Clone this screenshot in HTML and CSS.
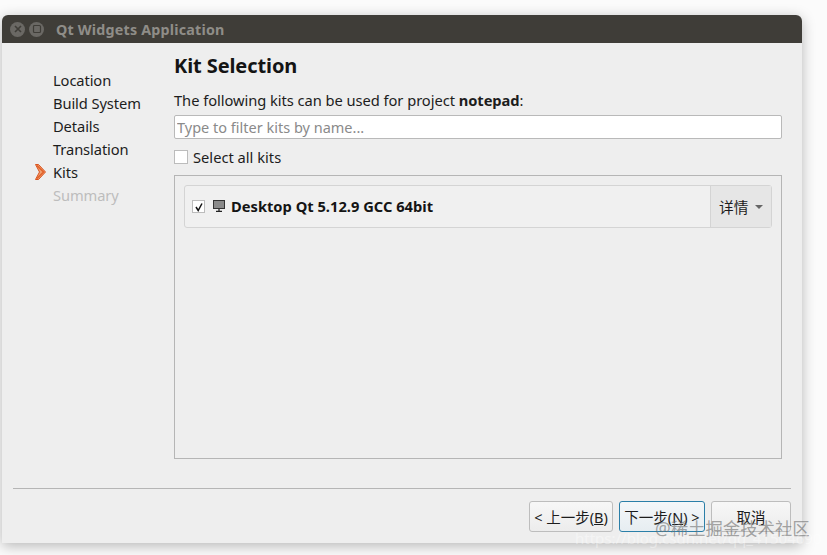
FILE: index.html
```html
<!DOCTYPE html>
<html>
<head>
    <title>Qt Widgets Application</title>
    <link rel="stylesheet" href="styles.css">
</head>
<body>
    <div class="window">
        <div class="titlebar">
            <span class="win-btn"><svg width="10" height="10" viewBox="0 0 10 10"><path d="M2 2l6 6M8 2l-6 6" stroke="#3f3d38" stroke-width="1.6"/></svg></span>
            <span class="win-btn"><svg width="10" height="10" viewBox="0 0 10 10"><rect x="1.5" y="1.5" width="7" height="7" rx="1" fill="none" stroke="#3f3d38" stroke-width="1.2"/></svg></span>
            <span class="win-title">Qt Widgets Application</span>
        </div>

        <div class="main">
            <ul class="steps">
                <li>Location</li>
                <li>Build System</li>
                <li>Details</li>
                <li>Translation</li>
                <li class="current">
                    <svg class="step-arrow" width="11" height="16" viewBox="0 0 11 16"><path d="M0.5 0.5H3.5L10.5 8L3.5 15.5H0.5L4.5 8Z" fill="#f0a070" stroke="#d9531e" stroke-width="1"/><path d="M2 1.5L8.5 8L2 14.5" fill="none" stroke="#e2622b" stroke-width="1.6"/></svg>
                    Kits
                </li>
                <li class="todo">Summary</li>
            </ul>

            <div class="page">
                <h1>Kit Selection</h1>
                <p class="intro">The following kits can be used for project <strong>notepad</strong>:</p>
                <input class="filter" type="text" placeholder="Type to filter kits by name...">
                <label class="select-all"><span class="check"></span>Select all kits</label>

                <div class="kit-panel">
                    <div class="kit-row">
                        <span class="check small"><svg width="10" height="10" viewBox="0 0 10 10"><path d="M2 5l2.2 3.5L8 1.5" fill="none" stroke="#111" stroke-width="1.5"/></svg></span>
                        <svg class="monitor" width="12" height="12" viewBox="0 0 12 12"><rect x="0.5" y="0.5" width="11" height="8" fill="#8a8a8a" stroke="#333"/><path d="M6 9v2M3 11.4h6" stroke="#222" stroke-width="1.3"/></svg>
                        <span class="kit-name">Desktop Qt 5.12.9 GCC 64bit</span>
                        <span class="details">详情<i class="caret"></i></span>
                    </div>
                </div>
            </div>
        </div>

        <div class="footer">
            <button>&lt; 上一步(<u>B</u>)</button>
            <button class="primary">下一步(<u>N</u>) &gt;</button>
            <button class="cancel">取消</button>
        </div>
    </div>

    <div class="mark-cn">@稀土掘金技术社区</div>
    <div class="mark-url">https://blog.csdn.net/qq_41504690</div>
</body>
</html>
```

FILE: styles.css
```css
html, body { margin: 0; height: 555px; overflow: hidden; }
body { background: #fbfbfb; font-family: "Noto Sans", "Noto Sans CJK SC", sans-serif; font-size: 14.7px; color: #1d1d1d; }

.window { margin: 15px 25px 0 2px; height: 528px; display: flex; flex-direction: column; background: #eeeeee; border-radius: 6px 6px 0 0; box-shadow: 0 3px 14px rgba(0,0,0,0.28); }

.titlebar { height: 28px; flex: none; display: flex; align-items: center; padding-left: 8px; background: #3f3d38; border-radius: 6px 6px 0 0; }
.win-btn { width: 15px; height: 15px; margin-right: 4px; border-radius: 50%; background: #6a6864; display: flex; align-items: center; justify-content: center; }
.win-title { margin-left: 8px; font-size: 14.3px; font-weight: 700; color: #8f8d88; letter-spacing: 0.2px; }

.main { flex: 1; display: flex; min-height: 0; }

.steps { width: 121px; margin: 0; padding: 26px 0 0 51px; list-style: none; }
.steps li { position: relative; height: 23px; line-height: 22px; letter-spacing: -0.1px; }
.steps .todo { color: #bdbdbd; }
.step-arrow { position: absolute; left: -18px; top: 3px; }

.page { width: 608px; }
h1 { margin: 10px 0 0; font-size: 20px; line-height: 26px; font-weight: 700; color: #141414; letter-spacing: -0.1px; }
.intro { margin: 10px 0 0; height: 22px; line-height: 22px; letter-spacing: -0.05px; }
.filter { display: block; box-sizing: border-box; width: 100%; height: 24px; margin: 4px 0 0; padding: 0 2px; border: 1px solid #b9b9b9; border-radius: 2px; background: #fff; font: 14.5px "Noto Sans", sans-serif; }
.filter::placeholder { color: #8a8a8a; opacity: 1; }

.select-all { display: flex; align-items: center; height: 22px; margin-top: 7px; }
.check { box-sizing: border-box; width: 14px; height: 14px; margin-right: 5px; background: #fff; border: 1px solid #bcbcbc; display: flex; align-items: center; justify-content: center; }
.check.small { width: 13px; height: 13px; margin: 0; flex: none; }

.kit-panel { box-sizing: border-box; height: 284px; margin-top: 7px; padding: 9px; border: 1px solid #b5b5b5; }
.kit-row { box-sizing: border-box; height: 43px; display: flex; align-items: center; padding-left: 7px; background: #f0f0f0; border: 1px solid #d4d4d4; border-radius: 3px; }
.monitor { margin-left: 8px; flex: none; margin-bottom: 2px; }
.kit-name { margin-left: 6px; margin-bottom: 2px; flex: 1; font-weight: 700; color: #141414; }
.details { box-sizing: border-box; width: 61px; height: 41px; display: flex; align-items: center; padding-left: 8px; background: #e6e6e6; border-left: 1px solid #d4d4d4; }
.caret { width: 0; height: 0; margin-left: 7px; border-left: 4px solid transparent; border-right: 4px solid transparent; border-top: 4px solid #666; }

.footer { flex: none; height: 55px; margin: 0 11px 0 11px; display: flex; justify-content: flex-end; align-items: flex-start; gap: 6px; padding-top: 12px; box-sizing: border-box; border-top: 1px solid #b5b5b5; }
button { box-sizing: border-box; height: 31px; width: 84px; padding: 0; border: 1px solid #bdbdbd; border-radius: 3px; background: linear-gradient(#f7f7f7, #ececec); font: 14.5px "Noto Sans", "Noto Sans CJK SC", sans-serif; color: #1d1d1d; white-space: nowrap; }
.primary { width: 86px; border-color: #2b7fa8; background: linear-gradient(#f4f7f9, #e6edf1); }
.cancel { width: 80px; }

/* watermark sits over the screenshot */
.mark-cn { position: absolute; left: 655px; top: 518px; font-size: 17.4px; line-height: 20px; color: rgba(110,110,110,0.62); white-space: nowrap; }
.mark-url { position: absolute; left: 575px; top: 529px; font: 15px "Noto Sans", sans-serif; line-height: 18px; color: rgba(255,255,255,0.4); white-space: nowrap; }
```
